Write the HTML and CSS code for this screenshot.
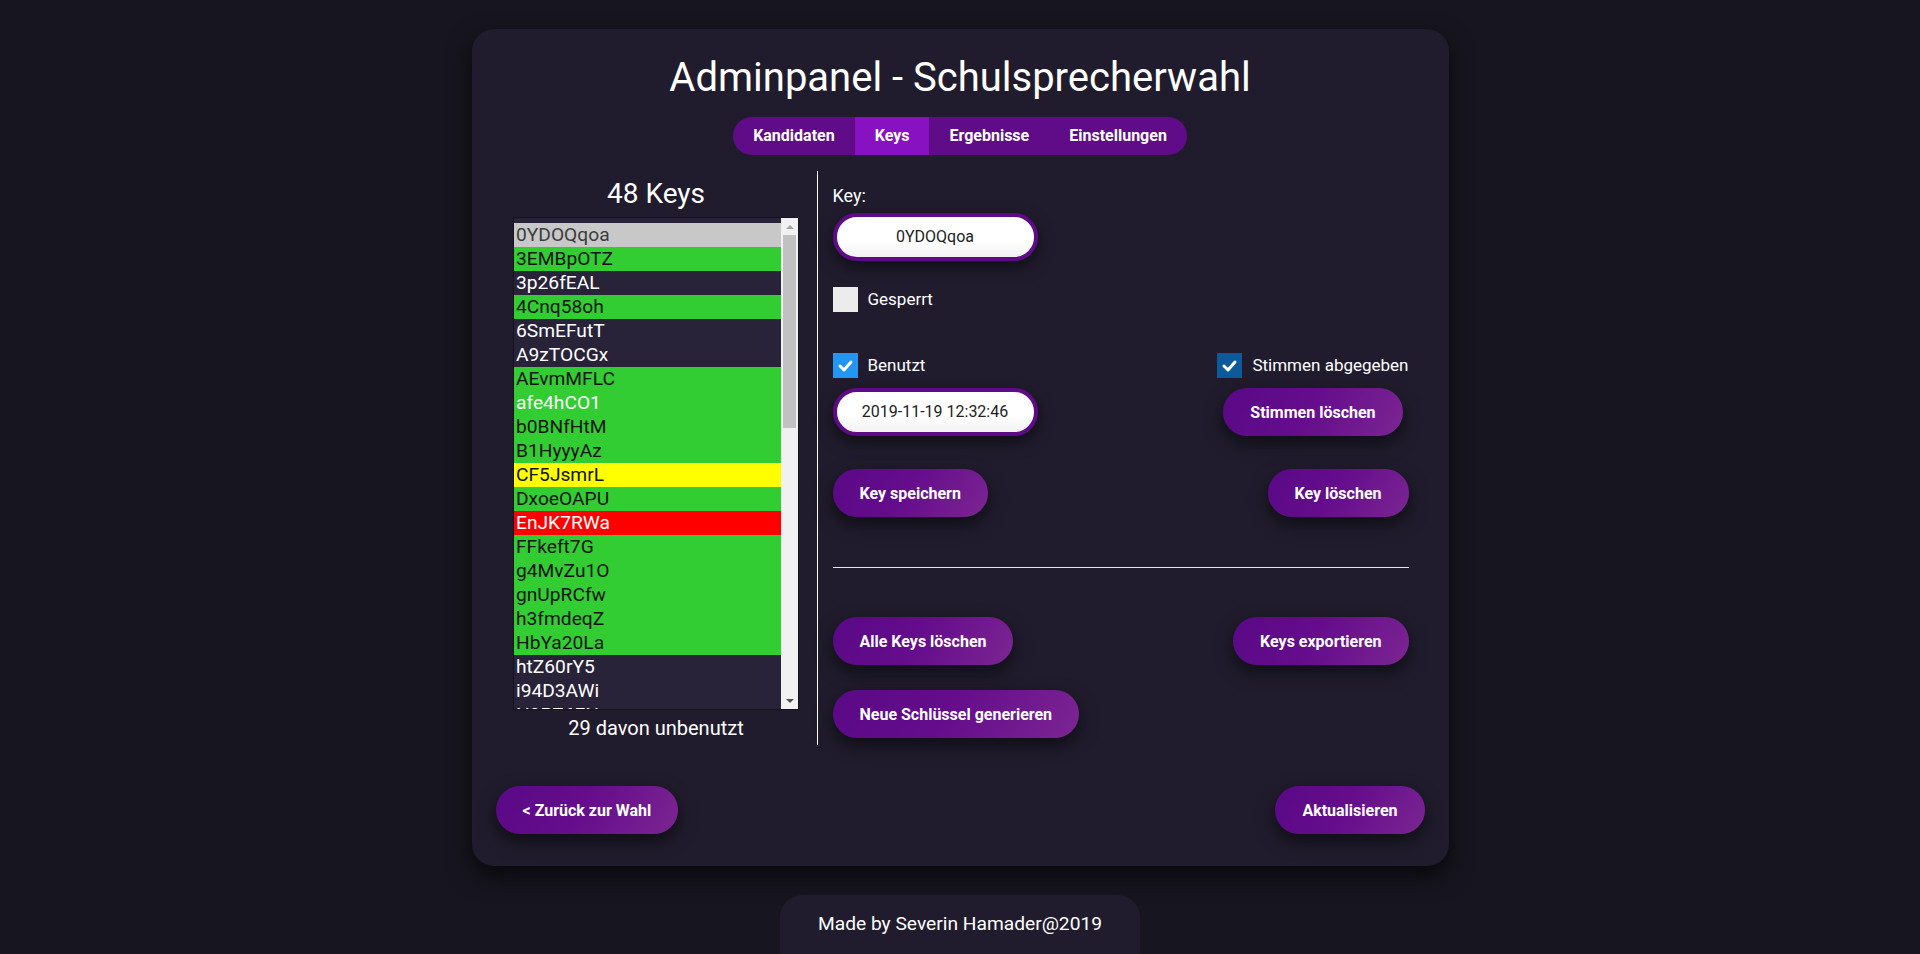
FILE: index.html
```html
<!DOCTYPE html>
<html lang="de">
<head>
<meta charset="utf-8">
<title>Adminpanel - Schulsprecherwahl</title>
<link rel="stylesheet" href="styles.css">
</head>
<body>
<div class="card">
  <h1 class="title">Adminpanel - Schulsprecherwahl</h1>
  <nav class="tabs">
    <a class="tab">Kandidaten</a>
    <a class="tab active">Keys</a>
    <a class="tab">Ergebnisse</a>
    <a class="tab">Einstellungen</a>
  </nav>

  <div class="main">
    <section class="keys">
      <h2 class="keys-count">48 Keys</h2>
      <div class="listbox">
        <ul class="keylist">
          <li class="k sel">0YDOQqoa</li>
          <li class="k green">3EMBpOTZ</li>
          <li class="k">3p26fEAL</li>
          <li class="k green">4Cnq58oh</li>
          <li class="k">6SmEFutT</li>
          <li class="k">A9zTOCGx</li>
          <li class="k green">AEvmMFLC</li>
          <li class="k green light">afe4hCO1</li>
          <li class="k green">b0BNfHtM</li>
          <li class="k green">B1HyyyAz</li>
          <li class="k yellow">CF5JsmrL</li>
          <li class="k green">DxoeOAPU</li>
          <li class="k red">EnJK7RWa</li>
          <li class="k green">FFkeft7G</li>
          <li class="k green">g4MvZu1O</li>
          <li class="k green">gnUpRCfw</li>
          <li class="k green">h3fmdeqZ</li>
          <li class="k green">HbYa20La</li>
          <li class="k">htZ60rY5</li>
          <li class="k">i94D3AWi</li>
          <li class="k">N9PZ6FN</li>
        </ul>
        <div class="sb">
          <span class="sb-btn"><span class="tri-up"></span></span>
          <span class="sb-thumb"></span>
          <span class="sb-btn sb-end"><span class="tri-down"></span></span>
        </div>
      </div>
      <p class="unused">29 davon unbenutzt</p>
    </section>

    <section class="editor">
      <div class="field-label">Key:</div>
      <div class="pill-input">0YDOQqoa</div>

      <div class="check gesperrt">
        <span class="cb cb-off"></span>
        <span>Gesperrt</span>
      </div>

      <div class="row used-row">
        <div class="stack">
          <div class="check">
            <span class="cb cb-on"><svg viewBox="0 0 25 25" width="25" height="25"><polyline points="7,13 11,17 18,9" fill="none" stroke="#fff" stroke-width="3" stroke-linecap="round" stroke-linejoin="round"/></svg></span>
            <span>Benutzt</span>
          </div>
          <div class="pill-input">2019-11-19 12:32:46</div>
        </div>
        <div class="stack stack-center">
          <div class="check">
            <span class="cb cb-dark"><svg viewBox="0 0 25 25" width="25" height="25"><polyline points="7,13 11,17 18,9" fill="none" stroke="#fff" stroke-width="3" stroke-linecap="round" stroke-linejoin="round"/></svg></span>
            <span>Stimmen abgegeben</span>
          </div>
          <button class="btn">Stimmen löschen</button>
        </div>
      </div>

      <div class="row save-row">
        <button class="btn">Key speichern</button>
        <button class="btn">Key löschen</button>
      </div>

      <hr class="sep">

      <div class="row bulk-row">
        <button class="btn">Alle Keys löschen</button>
        <button class="btn">Keys exportieren</button>
      </div>
      <div class="row gen-row">
        <button class="btn">Neue Schlüssel generieren</button>
      </div>
    </section>
  </div>

  <div class="row bottom-row">
    <button class="btn">&lt; Zurück zur Wahl</button>
    <button class="btn">Aktualisieren</button>
  </div>
</div>

<footer class="footer">Made by Severin Hamader@2019</footer>
</body>
</html>
```

FILE: styles.css
```css
* { box-sizing: border-box; }

html, body {
  margin: 0;
  padding: 0;
  height: 100%;
  overflow: hidden;
}

body {
  background: #17151f;
  font-family: Roboto, "Liberation Sans", Arial, sans-serif;
  color: #fff;
}

.card {
  width: 977px;
  margin: 29px auto 0;
  padding: 25px 24px 32px;
  background: #201c2d;
  border-radius: 22px;
  box-shadow: 0 10px 24px rgba(0, 0, 0, 0.65);
}

.title {
  margin: 0;
  font-size: 40px;
  font-weight: 400;
  line-height: 47px;
  text-align: center;
  color: #fff;
}

.tabs {
  display: flex;
  width: max-content;
  margin: 16px auto 0;
  height: 38px;
  border-radius: 19px;
  overflow: hidden;
  background: #600b88;
}

.tab {
  display: block;
  padding: 0 20px;
  line-height: 38px;
  font-size: 16px;
  font-weight: 700;
  color: #fff;
}

.tab.active {
  background: #8811c1;
}

.main {
  display: flex;
  margin-top: 16px;
  height: 574px;
}

.keys {
  width: 321px;
  display: flex;
  flex-direction: column;
  align-items: center;
}

.keys-count {
  margin: 6px 0 0;
  font-size: 28px;
  font-weight: 400;
  line-height: 33px;
}

.listbox {
  margin-top: 7px;
  width: 286px;
  height: 493px;
  display: flex;
  border: 1px solid #15121c;
  background: #282339;
}

.keylist {
  flex: 1;
  list-style: none;
  margin: 0;
  padding: 5px 0 0;
  overflow: hidden;
}

.k {
  height: 24px;
  line-height: 24px;
  padding-left: 2px;
  font-size: 19.2px;
  color: #fff;
  white-space: nowrap;
}

.k.sel { background: #c8c8c8; color: #3d3d3d; }
.k.green { background: #32cd32; color: #0f140f; }
.k.green.light { color: #fff; }
.k.yellow { background: #ffff00; color: #111; }
.k.red { background: #ff0000; color: #fff; }

.sb {
  width: 17px;
  background: #f1f1f1;
  display: flex;
  flex-direction: column;
  align-items: center;
}

.sb-btn {
  width: 17px;
  height: 17px;
  display: flex;
  align-items: center;
  justify-content: center;
}

.sb-end { margin-top: auto; }

.tri-up {
  width: 0;
  height: 0;
  border-left: 4px solid transparent;
  border-right: 4px solid transparent;
  border-bottom: 4px solid #a3a3a3;
}

.tri-down {
  width: 0;
  height: 0;
  border-left: 4px solid transparent;
  border-right: 4px solid transparent;
  border-top: 4px solid #505050;
}

.sb-thumb {
  width: 13px;
  height: 193px;
  background: #c1c1c1;
}

.unused {
  margin: 7px 0 0;
  font-size: 20px;
  line-height: 23px;
}

.editor {
  flex: 1;
  border-left: 1px solid #fff;
  padding: 14px 16px 7px 15px;
  display: flex;
  flex-direction: column;
  align-items: flex-start;
}

.field-label {
  font-size: 18px;
  line-height: 21px;
}

.pill-input {
  margin-top: 7px;
  width: 205px;
  height: 48px;
  border: 4px solid #5f0a88;
  border-radius: 24px;
  background: linear-gradient(#ffffff 60%, #f1f1f1);
  color: #222;
  font-size: 16px;
  line-height: 40px;
  text-align: center;
  box-shadow: 0 6px 16px rgba(0, 0, 0, 0.5);
}

.check {
  display: flex;
  align-items: center;
  gap: 10px;
  font-size: 17px;
  line-height: 25px;
}

.gesperrt { margin-top: 26px; }

.cb {
  width: 25px;
  height: 25px;
  display: block;
}

.cb svg { display: block; }
.cb-off { background: #ececec; }
.cb-on { background: #2196f3; }
.cb-dark { background: #0d5a9b; }

.row {
  align-self: stretch;
  display: flex;
  justify-content: space-between;
  align-items: flex-start;
}

.used-row { margin-top: 41px; }

.stack {
  display: flex;
  flex-direction: column;
  align-items: flex-start;
  gap: 10px;
}

.stack .pill-input { margin-top: 0; }

.stack-center { align-items: center; }

.btn {
  height: 48px;
  padding: 0 27px;
  border: none;
  border-radius: 24px;
  background: linear-gradient(120deg, #5a0987 0%, #640c8c 45%, #7c2592 100%);
  color: #fff;
  font-family: Roboto, "Liberation Sans", Arial, sans-serif;
  font-size: 16px;
  font-weight: 700;
  box-shadow: 0 7px 18px rgba(0, 0, 0, 0.55);
  cursor: pointer;
}

.save-row { margin-top: 33px; }

.sep {
  align-self: stretch;
  margin: 50px 0 0;
  border: none;
  height: 1px;
  background: #e6e6e6;
}

.bulk-row { margin-top: 49px; }
.gen-row { margin-top: 25px; }

.bottom-row { margin-top: 41px; }

.footer {
  width: 360px;
  margin: 29px auto 0;
  padding: 17px 0 20px;
  background: #201c2d;
  border-radius: 22px 22px 0 0;
  font-size: 19.2px;
  line-height: 23px;
  text-align: center;
  color: #fff;
}
```
